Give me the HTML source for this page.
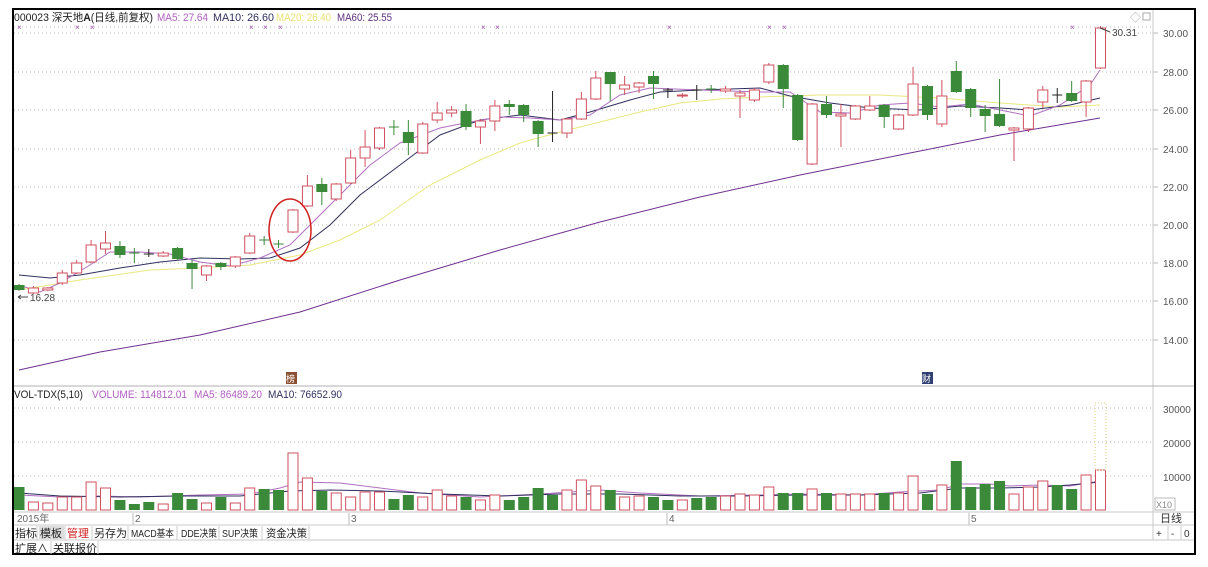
<!DOCTYPE html>
<html><head><meta charset="utf-8">
<style>
body{margin:0;width:1208px;height:562px;background:#fff;overflow:hidden;font-family:"Liberation Sans","Noto Sans CJK SC",sans-serif;}
svg text{font-family:"Liberation Sans","Noto Sans CJK SC",sans-serif;}
</style></head><body>
<svg id="s" width="1208" height="562" xmlns="http://www.w3.org/2000/svg">
<rect x="0" y="0" width="1208" height="562" fill="#fff"/>
<g id="grid" stroke="#b8b8b8" stroke-dasharray="1,3" stroke-width="1"></g>
<g id="ma"></g>
<g id="c"></g>
<g id="v"></g>
<line x1="1153" y1="9" x2="1153" y2="540" stroke="#c8c8c8"/>
<line x1="14" y1="386" x2="1195" y2="386" stroke="#b0b0b0"/>
<line x1="14" y1="512" x2="1195" y2="512" stroke="#c8c8c8"/>
<line x1="14" y1="525" x2="1195" y2="525" stroke="#c8c8c8"/>
<line x1="14" y1="540" x2="1195" y2="540" stroke="#c8c8c8"/>
<rect x="13" y="9" width="1182" height="545" fill="none" stroke="#000" stroke-width="2"/>
<text x="14" y="21" font-size="11" fill="#222" textLength="139" lengthAdjust="spacingAndGlyphs">000023 深天地<tspan font-weight="bold">A</tspan>(日线,前复权)</text>
<text x="157" y="21" font-size="11" fill="#b060c0" textLength="51" lengthAdjust="spacingAndGlyphs">MA5: 27.64</text>
<text x="213" y="21" font-size="11" fill="#303060" textLength="61" lengthAdjust="spacingAndGlyphs">MA10: 26.60</text>
<text x="276" y="21" font-size="11" fill="#e8e070" textLength="55" lengthAdjust="spacingAndGlyphs">MA20: 26.40</text>
<text x="337" y="21" font-size="11" fill="#603080" textLength="55" lengthAdjust="spacingAndGlyphs">MA60: 25.55</text>
<g id="xm" font-size="8" fill="#a050b0"></g>
<text x="1130" y="21" font-size="11" fill="#aaa">◇</text>
<rect x="1143" y="13" width="7" height="7" fill="none" stroke="#aaa"/>
<g font-size="10" fill="#555" id="pa"></g>
<ellipse cx="290" cy="230" rx="21" ry="31" fill="none" stroke="#d02020" stroke-width="1.5"/>
<text x="30" y="301" font-size="10" fill="#444">16.28</text>
<line x1="18" y1="297" x2="28" y2="297" stroke="#444"/>
<path d="M18 297 l3 -2 M18 297 l3 2" stroke="#444" fill="none"/>
<path d="M1100 28 L1110 32" stroke="#444"/>
<text x="1112" y="36" font-size="10" fill="#444">30.31</text>
<rect x="286" y="372" width="11" height="12" fill="#8a5030"/>
<text x="286" y="382" font-size="9" fill="#fff">榜</text>
<rect x="922" y="372" width="11" height="12" fill="#304070"/>
<text x="922" y="382" font-size="9" fill="#fff">财</text>
<text x="14" y="398" font-size="11" fill="#222" textLength="69" lengthAdjust="spacingAndGlyphs">VOL-TDX(5,10)</text>
<text x="92" y="398" font-size="11" fill="#b060c0" textLength="95" lengthAdjust="spacingAndGlyphs">VOLUME: 114812.01</text>
<text x="194" y="398" font-size="11" fill="#b060c0" textLength="68" lengthAdjust="spacingAndGlyphs">MA5: 86489.20</text>
<text x="268" y="398" font-size="11" fill="#303060" textLength="74" lengthAdjust="spacingAndGlyphs">MA10: 76652.90</text>
<text x="1163" y="413" font-size="10" fill="#555">30000</text>
<text x="1163" y="447" font-size="10" fill="#555">20000</text>
<text x="1163" y="481" font-size="10" fill="#555">10000</text>
<rect x="1155" y="498" width="20" height="12" fill="none" stroke="#bbb"/>
<text x="1156" y="508" font-size="9" fill="#888">X10</text>
<g font-size="10" fill="#666">
<text x="17" y="522">2015年</text>
<text x="135" y="522">2</text><line x1="133" y1="513" x2="133" y2="525" stroke="#bbb"/>
<text x="351" y="522">3</text><line x1="349" y1="513" x2="349" y2="525" stroke="#bbb"/>
<text x="669" y="522">4</text><line x1="667" y1="513" x2="667" y2="525" stroke="#bbb"/>
<text x="971" y="522">5</text><line x1="969" y1="513" x2="969" y2="525" stroke="#bbb"/>
</g>
<text x="1160" y="522" font-size="11" fill="#333">日线</text>
<g font-size="11" fill="#222">
<text x="15" y="537">指标</text>
<rect x="39" y="526" width="25" height="13" fill="#ddd"/><text x="40" y="537">模板</text>
<text x="67" y="537" fill="#d02020">管理</text>
<text x="94" y="537">另存为</text>
<text x="131" y="537" font-size="10" textLength="43" lengthAdjust="spacingAndGlyphs">MACD基本</text>
<text x="181" y="537" font-size="10" textLength="36" lengthAdjust="spacingAndGlyphs">DDE决策</text>
<text x="222" y="537" font-size="10" textLength="36" lengthAdjust="spacingAndGlyphs">SUP决策</text>
<text x="266" y="537" textLength="41" lengthAdjust="spacingAndGlyphs">资金决策</text>
<text x="15" y="552">扩展∧</text>
<text x="53" y="552">关联报价</text>
</g>
<g stroke="#ccc">
<line x1="37" y1="526" x2="37" y2="540"/><line x1="65" y1="526" x2="65" y2="540"/><line x1="92" y1="526" x2="92" y2="540"/><line x1="128" y1="526" x2="128" y2="540"/><line x1="177" y1="526" x2="177" y2="540"/><line x1="219" y1="526" x2="219" y2="540"/><line x1="262" y1="526" x2="262" y2="540"/><line x1="309" y1="526" x2="309" y2="540"/>
<line x1="51" y1="541" x2="51" y2="554"/><line x1="98" y1="541" x2="98" y2="554"/>
<line x1="1168" y1="526" x2="1168" y2="540"/><line x1="1181" y1="526" x2="1181" y2="540"/>
</g>
<text x="1156" y="537" font-size="10" fill="#333">+</text>
<text x="1171" y="537" font-size="10" fill="#333">-</text>
<text x="1184" y="537" font-size="10" fill="#333">0</text>
</svg>
<script>
var NS="http://www.w3.org/2000/svg";
function el(p,t,a){var e=document.createElementNS(NS,t);for(var k in a)e.setAttribute(k,a[k]);document.getElementById(p).appendChild(e);return e;}
[33,72,110,149,187,225,263,301,340].forEach(function(y,i){el('grid','line',{x1:14,y1:y,x2:1153,y2:y});
 var t=el('pa','text',{x:1163,y:y+4});t.textContent=(30-2*i).toFixed(2);
 el('grid','line',{x1:1153,y1:y,x2:1158,y2:y,'stroke-dasharray':'none'});});
[27,408,442,476].forEach(function(y){el('grid','line',{x1:14,y1:y,x2:1153,y2:y});});
[19,77,92,251,265,280,483,497,669,769,784,1072].forEach(function(x){var t=el('xm','text',{x:x-2,y:30});t.textContent='×';});
var C=[['g',285,290,284,291],['r',288,293,286,294],['r',288,290,287,291],['r',273,283,270,285],['r',263,273,260,274],['r',245,262,240,263],['r',243,249,231,254],['g',246,255,241,258],['g',253,253,248,263],['k',254,254,249,257],['r',253,256,251,257],['g',248,259,247,260],['g',263,269,260,289],['r',266,275,265,281],['g',263,267,262,270],['r',257,266,256,268],['r',236,253,233,254],['g',240,240,236,245],['g',244,244,240,248],['r',210,232,209,233],['r',186,206,175,207],['g',184,192,178,205],['r',184,199,183,201],['r',158,183,150,184],['r',147,158,130,167],['r',128,148,127,150],
['g',127,127,120,135],['g',132,143,120,155],['r',124,153,122,154],['r',113,120,102,123],['r',110,113,106,117],['g',111,127,104,130],['r',121,127,119,144],['r',106,121,100,131],['g',104,107,100,115],['g',105,115,104,122],['g',121,134,120,147],['k',133,133,91,142],['r',119,133,118,138],['r',99,119,92,120],['r',78,99,71,100],['g',72,84,72,101],['r',85,89,76,95],['r',83,87,82,93],['g',76,84,71,99],['k',90,90,88,98],['r',95,96,93,98],['k',90,90,85,100],['g',89,89,85,93],['r',89,91,86,93],['r',93,96,90,118],['r',90,100,88,102],
['r',65,82,63,84],['g',65,89,64,108],['g',95,140,94,141],['r',104,164,103,165],['g',104,115,96,118],['r',114,116,104,147],['r',106,119,105,120],['r',106,110,96,111],['g',105,117,104,128],['r',115,129,114,130],['r',84,115,67,116],['g',86,115,85,120],['r',96,124,80,127],['g',71,92,61,93],['g',89,108,88,117],['g',109,116,105,132],['g',114,126,79,127],['r',128,130,127,161],['r',108,129,107,132],['r',90,102,86,108],['k',95,95,88,103],['g',93,101,81,102],['r',81,102,80,117],['r',28,68,26,69]];
var V=[487,502,503,497,497,482,488,500,504,502,504,493,499,503,497,503,488,489,490,453,478,491,493,497,492,492,499,495,497,490,496,497,500,495,500,497,488,495,490,480,486,490,497,496,497,500,500,498,497,496,494,495,487,493,493,489,493,494,494,494,493,493,476,494,485,461,487,484,481,494,487,481,485,489,475,470];
var RC='#d05060',GC='#3a8a3a';
C.forEach(function(d,i){var x=19+i*14.42;var col=d[0]=='r'?RC:(d[0]=='g'?GC:'#222');
 el('c','line',{x1:x,y1:d[3],x2:x,y2:d[1],stroke:col});el('c','line',{x1:x,y1:d[2],x2:x,y2:d[4],stroke:col});
 var h=d[2]-d[1];
 if(d[0]=='k'||h<1){el('c','line',{x1:x-5,y1:d[1],x2:x+5,y2:d[1],stroke:col});}
 else if(d[0]=='r'){el('c','rect',{x:x-5,y:d[1],width:10,height:h,fill:'#fff',stroke:col});}
 else{el('c','rect',{x:x-5.5,y:d[1],width:11,height:h,fill:col});}
 var vy=V[i],vc=d[0]=='r'?RC:GC;
 if(d[0]=='r')el('v','rect',{x:x-5,y:vy,width:10,height:510-vy,fill:'#fff',stroke:vc});
 else el('v','rect',{x:x-5.5,y:vy,width:11,height:510-vy,fill:GC});
});
el('v','rect',{x:1095,y:403,width:11,height:67,fill:'none',stroke:'#d8d080','stroke-dasharray':'1,2'});
function pl(pts,col){el('ma','polyline',{points:pts,fill:'none',stroke:col,'stroke-width':1});}
pl("19,370 100,352 200,335 300,312 400,280 500,250 600,222 700,197 800,175 900,155 1000,135 1100,118",'#703090');
pl("19,290 80,280 150,270 200,268 250,265 300,255 340,240 380,220 430,185 480,160 520,143 560,132 600,122 640,112 680,103 720,99 760,97 820,95 880,95 940,98 1000,103 1060,107 1100,105",'#e8e880');
pl("19,275 50,278 80,275 120,268 160,262 200,258 240,259 270,258 300,248 330,225 360,195 400,165 440,135 480,120 520,115 560,120 590,112 630,100 660,92 700,90 760,88 790,96 830,103 870,108 920,110 960,106 1000,108 1030,110 1070,105 1100,98",'#303060');
pl("19,285 40,292 60,283 90,265 110,252 140,252 170,254 200,262 230,266 260,258 290,245 310,225 340,195 370,165 400,143 440,128 470,122 500,117 530,118 560,120 590,115 620,95 650,88 700,90 760,92 790,92 820,112 850,113 880,105 910,103 940,107 970,104 1000,110 1030,116 1060,105 1090,85 1100,70",'#b070c0');
pl("19,495 60,497 100,496 140,497 200,495 250,494 280,488 300,482 340,483 380,488 420,493 480,497 540,494 600,490 640,493 700,496 760,495 800,494 860,495 900,492 940,490 960,484 990,484 1010,486 1040,485 1070,486 1100,481",'#b070c0');
pl("19,493 60,496 120,497 180,496 240,496 290,491 330,490 380,491 440,494 500,496 560,494 620,494 680,496 740,496 800,495 860,495 920,493 960,488 1000,488 1040,487 1070,485 1100,482",'#303060');
</script>
</body></html>
